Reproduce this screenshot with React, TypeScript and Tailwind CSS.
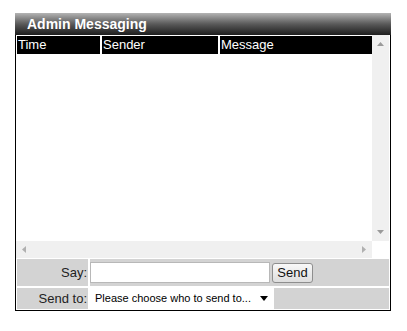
import { useState } from "react";

const COLUMNS = [
  { label: "Time", width: "w-[83px]" },
  { label: "Sender", width: "w-[116px]" },
  { label: "Message", width: "flex-1" },
];

function ArrowUp() {
  return (
    <svg width="7" height="4" viewBox="0 0 7 4">
      <path d="M0 4 L3.5 0 L7 4 Z" fill="#9a9a9a" />
    </svg>
  );
}

function ArrowDown() {
  return (
    <svg width="7" height="4" viewBox="0 0 7 4">
      <path d="M0 0 L3.5 4 L7 0 Z" fill="#9a9a9a" />
    </svg>
  );
}

function ArrowLeft() {
  return (
    <svg width="4" height="7" viewBox="0 0 4 7">
      <path d="M4 0 L0 3.5 L4 7 Z" fill="#b0b0b0" />
    </svg>
  );
}

function ArrowRight() {
  return (
    <svg width="4" height="7" viewBox="0 0 4 7">
      <path d="M0 0 L4 3.5 L0 7 Z" fill="#b0b0b0" />
    </svg>
  );
}

export default function App() {
  const [say, setSay] = useState("");
  const [target, setTarget] = useState("");

  return (
    <div className="min-h-[331px] bg-white pl-[15px] pt-[13px] font-['Liberation_Sans',Arial,sans-serif]">
      <div className="w-[376px]">
        {/* title bar */}
        <div className="flex h-[22px] items-center bg-linear-to-b from-[#b4b4b4] via-[#5a5a5a] to-[#1e1e1e] pl-[12px] text-[14px] font-bold text-white">
          Admin Messaging
        </div>

        <div className="w-[376px] border-x border-b border-black">
          {/* message log */}
          <div className="flex">
            <div className="flex w-[356px] flex-col">
              <div className="flex gap-[2px] bg-white pl-[1px] pt-[1px]">
                {COLUMNS.map((col) => (
                  <div
                    key={col.label}
                    className={`${col.width} h-[18px] bg-black pl-[1px] text-[13px] leading-[18px] text-white`}
                  >
                    {col.label}
                  </div>
                ))}
              </div>
              <div className="h-[187px] bg-white" />
            </div>
            <div className="flex w-[17px] flex-col items-center justify-between bg-[#f0f0f0] py-[7px]">
              <ArrowUp />
              <ArrowDown />
            </div>
            <div className="w-[1px] bg-white" />
          </div>
          <div className="flex">
            <div className="flex h-[17px] w-[356px] items-center justify-between bg-[#f0f0f0] px-[6px]">
              <ArrowLeft />
              <ArrowRight />
            </div>
            <div className="w-[18px] bg-white" />
          </div>

          {/* form */}
          <div className="flex flex-col gap-[2px] bg-white px-[1px] pb-[1px] pt-[1px] text-[13px] text-[#222]">
            <div className="flex h-[27px] gap-[2px]">
              <div className="flex w-[71px] items-center justify-end bg-[#d3d3d3] pr-[1px]">
                Say:
              </div>
              <div className="flex flex-1 items-center gap-[2px] bg-[#d3d3d3]">
                <input
                  value={say}
                  onChange={(e) => setSay(e.target.value)}
                  className="h-[21px] w-[180px] border border-[#b8b8b8] bg-white px-1 text-[12px] outline-none"
                />
                <button className="h-[20px] w-[41px] rounded-[3px] border border-[#8e8e8e] bg-linear-to-b from-[#f8f8f8] to-[#dedede] text-[13px] leading-[18px] text-[#111]">
                  Send
                </button>
              </div>
            </div>
            <div className="flex h-[21px] gap-[2px]">
              <div className="flex w-[71px] items-center justify-end bg-[#d3d3d3] pr-[1px]">
                Send to:
              </div>
              <div className="flex flex-1 items-center bg-[#d3d3d3]">
                <div className="relative h-[21px] w-[184px] bg-white">
                  <select
                    value={target}
                    onChange={(e) => setTarget(e.target.value)}
                    className="h-full w-full appearance-none bg-transparent pl-[5px] text-[11px] text-black outline-none"
                  >
                    <option value="">Please choose who to send to...</option>
                  </select>
                  <svg
                    className="pointer-events-none absolute right-[6px] top-[8px]"
                    width="8"
                    height="5"
                    viewBox="0 0 8 5"
                  >
                    <path d="M0 0 L8 0 L4 5 Z" fill="#000" />
                  </svg>
                </div>
              </div>
            </div>
          </div>
        </div>
      </div>
    </div>
  );
}
